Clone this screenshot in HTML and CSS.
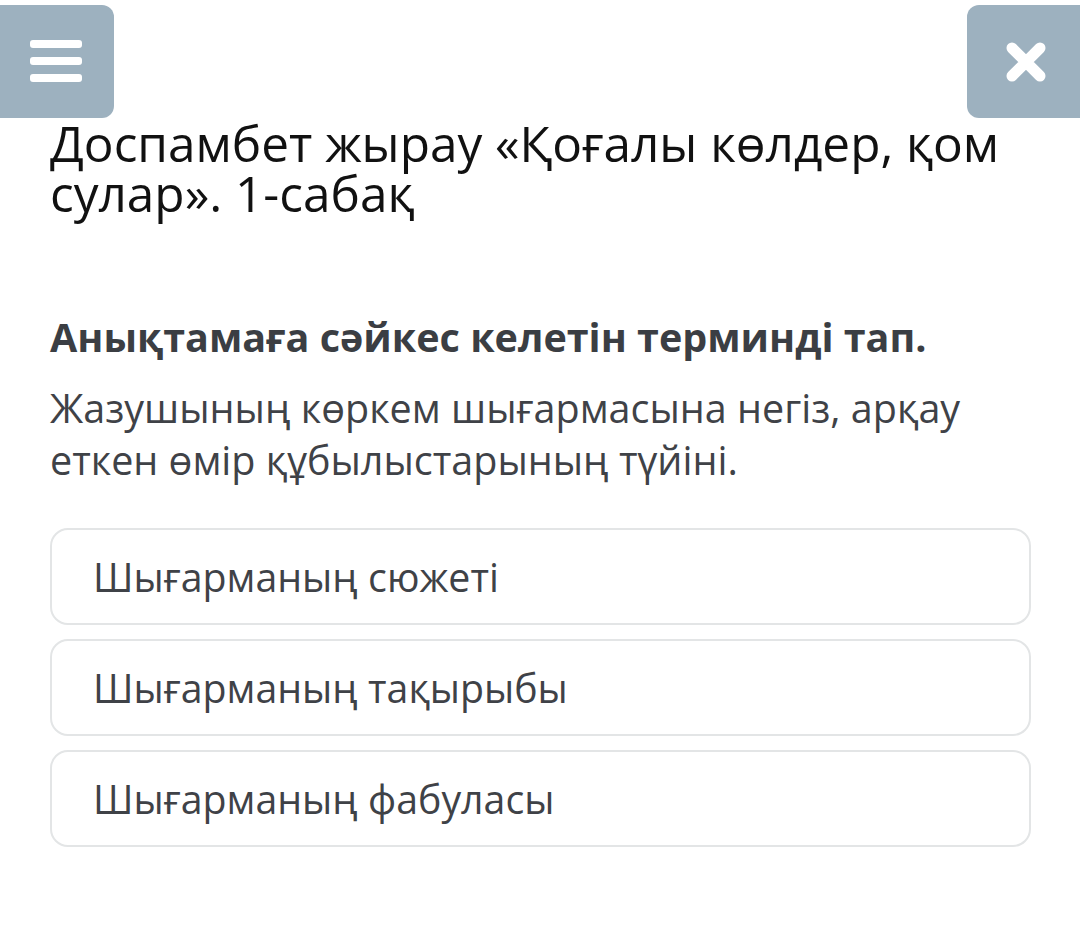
FILE: index.html
```html
<!DOCTYPE html>
<html>
<head>
<meta charset="utf-8">
<link rel="stylesheet" href="styles.css">
</head>
<body>
<div class="page">
  <header class="topbar">
    <button class="btn btn-menu" aria-label="menu">
      <svg width="52" height="44" viewBox="0 0 52 44">
        <rect x="0" y="0" width="52" height="8" rx="3" fill="#fff"/>
        <rect x="0" y="17" width="52" height="8" rx="3" fill="#fff"/>
        <rect x="0" y="34" width="52" height="8" rx="3" fill="#fff"/>
      </svg>
    </button>
    <button class="btn btn-close" aria-label="close">
      <svg width="42" height="42" viewBox="0 0 42 42">
        <path d="M7 7 L35 35 M35 7 L7 35" stroke="#fff" stroke-width="11" stroke-linecap="round"/>
      </svg>
    </button>
  </header>
  <main class="content">
    <h1 class="title">Доспамбет жырау «Қоғалы көлдер, қом сулар». 1-сабақ</h1>
    <h2 class="question">Анықтамаға сәйкес келетін терминді тап.</h2>
    <p class="prompt">Жазушының көркем шығармасына негіз, арқау еткен өмір құбылыстарының түйіні.</p>
    <div class="options">
      <div class="option">Шығарманың сюжеті</div>
      <div class="option">Шығарманың тақырыбы</div>
      <div class="option">Шығарманың фабуласы</div>
    </div>
  </main>
</div>
</body>
</html>
```
FILE: styles.css
```css
html, body {
  margin: 0;
  padding: 0;
  background: #ffffff;
}
body {
  font-family: "Open Sans", "Noto Sans", sans-serif;
  width: 1080px;
  height: 927px;
  overflow: hidden;
}
.topbar {
  display: flex;
  justify-content: space-between;
  padding-top: 5px;
}
.btn {
  border: none;
  margin: 0;
  padding: 0;
  width: 114px;
  height: 113px;
  background: #9db1bf;
  display: flex;
  align-items: center;
  justify-content: center;
  cursor: pointer;
}
.btn-menu {
  border-radius: 0 12px 12px 0;
  padding-right: 2px;
}
.btn-close {
  width: 113px;
  border-radius: 12px 0 0 12px;
  padding-left: 4px;
}
.content {
  padding: 0 49px 0 50px;
}
.title {
  margin: 0;
  font-size: 49.5px;
  line-height: 50px;
  font-weight: 400;
  color: #111111;
}
.question {
  margin: 94px 0 0 0;
  font-size: 39.5px;
  line-height: 50px;
  font-weight: 700;
  color: #3b3e43;
}
.prompt {
  margin: 20px 0 0 0;
  font-size: 39.5px;
  line-height: 52px;
  color: #3f4247;
}
.options {
  margin-top: 42px;
  display: flex;
  flex-direction: column;
  gap: 14px;
}
.option {
  height: 93px;
  border: 2px solid #e3e5e6;
  border-radius: 18px;
  padding-left: 41px;
  display: flex;
  align-items: center;
  font-size: 39.3px;
  color: #3f4247;
}
```
